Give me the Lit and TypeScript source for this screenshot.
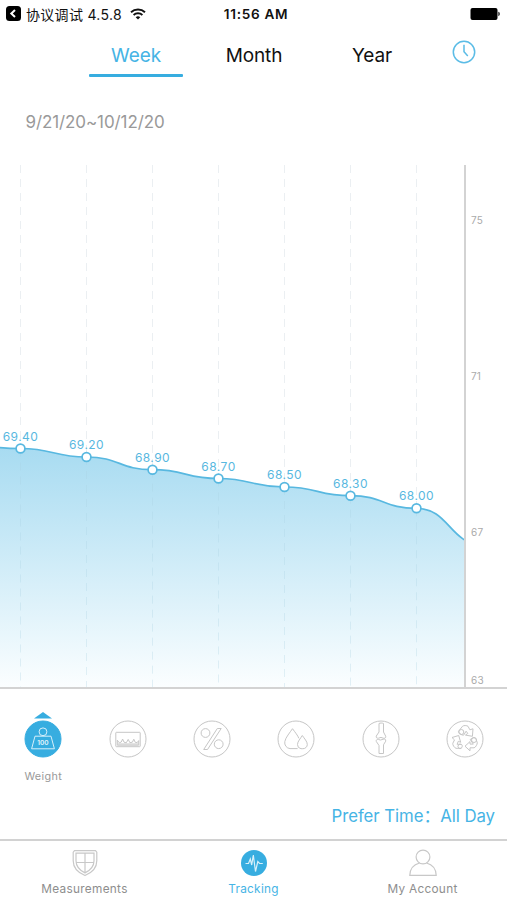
import { LitElement, html, svg, css } from "lit";
import { customElement } from "lit/decorators.js";

const POINTS = [
  { x: 20.5, y: 448.5, label: "69.40" },
  { x: 86.5, y: 457, label: "69.20" },
  { x: 152.5, y: 469.7, label: "68.90" },
  { x: 218.5, y: 478.5, label: "68.70" },
  { x: 284.5, y: 487, label: "68.50" },
  { x: 350.5, y: 495.7, label: "68.30" },
  { x: 416.5, y: 508.3, label: "68.00" },
];

const TICKS = [
  { y: 223.5, label: "75" },
  { y: 379.5, label: "71" },
  { y: 535.5, label: "67" },
  { y: 684, label: "63" },
];

function curve(): string {
  const all = [{ x: -45.5, y: 444 }, ...POINTS, { x: 482.5, y: 544.5 }];
  let d = `M${all[0].x} ${all[0].y}`;
  for (let i = 1; i < all.length; i++) {
    const a = all[i - 1];
    const b = all[i];
    const m = (a.x + b.x) / 2;
    d += ` C${m} ${a.y} ${m} ${b.y} ${b.x} ${b.y}`;
  }
  return d;
}

const METRICS = [
  {
    name: "Weight",
    active: true,
    icon: svg`<circle cx="19" cy="11.8" r="3.9"/><path d="M11 16.2h16l3.4 12.6H7.6Z"/>
      <text x="19" y="24.6" text-anchor="middle" class="kg">100</text>`,
  },
  {
    name: "BMI",
    icon: svg`<rect x="6.8" y="12.3" width="24.4" height="14.4" rx=".6"/>
      <path d="M8.3 25.2v-5l2 2.6 2-.8 1.3-3 1.4 3.2 2.3.6 1.9-3.4 1.7 3.3 2.5-.5 1.4-3 1.4 3.1 2 .3 1.500-2v4.600Z"/><path d="M9 24h20"/>`,
  },
  {
    name: "Body fat",
    icon: svg`<circle cx="12.5" cy="13" r="4.4"/><circle cx="25.7" cy="24.2" r="4.4"/>
      <path d="M24.3 8.500h3.900L14.500 29.500H10.700Z"/>`,
  },
  {
    name: "Water",
    icon: svg`<path d="M20.6 28.6H13a5.900 5.900 0 0 1-5.200-7C8.500 17.500 13 12.500 15.500 8.700c2.500 3.500 5.500 7 6.300 9.600"/>
      <path d="M25.300 15.500c2 3 5 6 5 9a4.300 4.300 0 0 1-4.500 4.200H24a4.200 4.200 0 0 1-3.500-4.200c0-3 3-6 4.800-9Z"/>`,
  },
  {
    name: "Bone",
    icon: svg`<path d="M17 3.500c1-.6 3.300-.6 4.500 0v8.500l2.200 4.200c.4 1.700-1 2.400-2.500 2L19 17.400l-2.500.8c-1.800.2-2.700-.8-2.200-2.200l2.700-4Z"/>
      <path d="M17 33.500h4.500V24.800l2.200-3.600c.4-2-1.200-2.800-2.700-1.900l-2.500.7-2-.5c-1.700-.3-2.700.7-2.200 2l2.700 4Z"/>`,
  },
  {
    name: "Metabolism",
    icon: svg`<path d="M16.500 6.300c.8-1 4.500-1 5.500 0l1.900 3.500 3.100-1-.6 7.500-6.900-1.200 2.300-1.700-1.700-2.200-2.500 4"/>
      <path d="M12.500 11.300 16.500 6.300M12.500 11.300c.2 2 3 3.900 5.100 3.900"/><circle cx="15.300" cy="12" r="2.500"/>
      <path d="M6 17.500l6.700-2 2 6.800-2.400-1-1.200 3h4.300c1.400.8 1 3.600-.5 4H10c-1.600-.5-3.600-3.500-3.200-5l1.700-3.400Z"/><path d="M15.400 24.500a2.200 2.200 0 1 0 0 3.700"/>
      <path d="M24.200 19.500l3-1.700c1.600-.1 2.600.6 2.900 1.500l1.200 3.500c0 1.600-1.700 4.600-3.200 5H24v3l-5-4.600 5-4.600v2.500h3.300Z"/><circle cx="28" cy="20" r="2.500"/>`,
  },
];

@customElement("app-root")
export class AppRoot extends LitElement {
  static styles = css`
    :host {
      display: flex;
      flex-direction: column;
      width: 507px;
      height: 900px;
      overflow: hidden;
      background: #fff;
      font-family: Inter, "Noto Sans CJK SC", sans-serif;
      color: #111;
    }
    :host > div { flex: none; }
    svg { display: block; fill: none; overflow: visible; }
    .status {
      height: 27px;
      display: grid;
      grid-template-columns: 1fr auto 1fr;
      align-items: center;
      box-sizing: border-box;
      padding: 0 7px 0 6px;
      font-size: 14px;
    }
    .back { display: flex; align-items: center; gap: 5px; }
    .carrier { white-space: nowrap; letter-spacing: 0.3px; }
    .wifi { margin-left: 3px; }
    .time { font-weight: 600; font-size: 13.6px; letter-spacing: 0.7px; padding: 1px 0 0 6px; }
    .battery { justify-self: end; }
    .tabs {
      height: 51px;
      display: grid;
      grid-template-columns: 94px 94px 94px 1fr;
      column-gap: 24px;
      padding-left: 89px;
      font-size: 19px;
      letter-spacing: -0.1px;
    }
    .tab {
      position: relative;
      height: 50px;
      text-align: center;
      line-height: 58px;
    }
    .tab.on { color: #46b4e5; }
    .tab.on::after {
      content: "";
      position: absolute;
      left: 0;
      right: 0;
      bottom: 0;
      height: 3.5px;
      border-radius: 1px;
      background: #37ade0;
    }
    .clock { margin: 13px 0 0 9px; }
    .range {
      height: 86px;
      box-sizing: border-box;
      padding: 32px 0 0 25.5px;
      line-height: 24px;
      font-size: 17px;
      letter-spacing: -0.1px;
      color: #999;
    }
    .chart { height: 525px; overflow: hidden; }
    .chart svg { overflow: hidden; }
    .grid { stroke: #e4eaee; stroke-opacity: .75; stroke-dasharray: 8 6; }
    .grid.under { stroke: #a9cfe0; stroke-opacity: .3; }
    .line { stroke: #58b8e0; stroke-width: 1.7; }
    .dot { fill: #fff; stroke: #58b8e0; stroke-width: 1.7; }
    .value { fill: #58b8df; font-size: 12px; letter-spacing: .45px; text-anchor: middle; }
    .tick { fill: #aaa; font-size: 10px; letter-spacing: .2px; }
    .axis { stroke: #d3d3d3; stroke-width: 2; }
    .metrics {
      height: 109px;
      display: grid;
      grid-template-columns: repeat(6, 84.4px);
      padding-left: 1px;
    }
    .metric { display: flex; flex-direction: column; align-items: center; padding-top: 22px; }
    .arrow { height: 9px; color: #37ade0; }
    .metric .icon { stroke: #c6c6c6; stroke-width: 1; stroke-linejoin: round; }
    .metric .icon.on { stroke: #d7effa; }
    .icon.on .ring { fill: #37ade0; stroke: #37ade0; }
    .kg { fill: #e5f5fc; stroke: none; font-size: 6.5px; font-weight: 600; }
    .caption { margin-top: 11px; font-size: 10.8px; line-height: 15px; color: #999; letter-spacing: .35px; }
    .prefer {
      height: 41px;
      box-sizing: border-box;
      display: flex;
      justify-content: flex-end;
      padding: 6px 12px 0 0;
      font-size: 16.8px;
      line-height: 24px;
      letter-spacing: -0.05px;
      color: #46b4e5;
    }
    .nav {
      height: 61px;
      box-sizing: border-box;
      border-top: 2px solid #d2d2d2;
      display: grid;
      grid-template-columns: repeat(3, 1fr);
      font-size: 11.8px;
      color: #8e8e8e;
    }
    .item { display: flex; flex-direction: column; align-items: center; padding-top: 7.5px; gap: 4px; letter-spacing: .3px; line-height: 16px; }
    .item.on { color: #46b4e5; }
    .item svg { stroke: #c8c8c8; stroke-width: 1.2; }
  `;

  render() {
    const d = curve();
    return html`
      <div class="status">
        <div class="back">
          <svg width="15" height="15" viewBox="0 0 15 15"><rect width="15" height="15" rx="3.5" fill="#000"/><path d="M9 4 5.300 7.500 9 11" stroke="#fff" stroke-width="2"/></svg>
          <span class="carrier">协议调试 4.5.8</span>
          <svg class="wifi" width="16" height="12" viewBox="0 0 16 12" stroke="#111" stroke-width="1.9"><path d="M1 4.300a10.300 10.300 0 0 1 14 0M3.600 7a6.500 6.500 0 0 1 8.800 0"/><path d="M8 11.500 5.700 9.300a3.300 3.300 0 0 1 4.600 0Z" fill="#111" stroke="none"/></svg>
        </div>
        <div class="time">11:56 AM</div>
        <svg class="battery" width="31" height="12" viewBox="0 0 31 12"><rect x="1.5" width="27" height="12" rx="2" fill="#000"/><path d="M29.300 3.800c2 .5 2 3.900 0 4.400Z" fill="#222"/></svg>
      </div>
      <div class="tabs">
        <div class="tab on">Week</div>
        <div class="tab">Month</div>
        <div class="tab">Year</div>
        <svg class="clock" width="24" height="24" viewBox="0 0 24 24" stroke="#5bbce6" stroke-width="1.5"><circle cx="12" cy="12" r="10.7"/><path d="M12 4.800v7l3.800 4.200"/></svg>
      </div>
      <div class="range">9/21/20~10/12/20</div>
      <div class="chart">
        <svg width="507" height="525" viewBox="0 164 507 525">
          <defs>
            <linearGradient id="fade" gradientUnits="userSpaceOnUse" x1="0" y1="446" x2="0" y2="687">
              <stop offset="0" stop-color="#a7dbf1"/><stop offset="1" stop-color="#fbfeff"/>
            </linearGradient>
            <clipPath id="plot"><rect x="0" y="164" width="464" height="524"/></clipPath>
          </defs>
          <g clip-path="url(#plot)">
            <path d="${d} V688 H-45.5 Z" fill="url(#fade)"/>
            ${POINTS.map((p) => svg`<path class="grid" d="M${p.x} 165V${p.y}"/><path class="grid under" d="M${p.x} ${p.y}V688"/>`)}
            <path class="line" d="${d}"/>
          </g>
          ${POINTS.map((p) => svg`<circle class="dot" cx="${p.x}" cy="${p.y}" r="4.4"/><text class="value" x="${p.x}" y="${p.y - 8}">${p.label}</text>`)}
          <path class="axis" d="M465 165V688M0 688H507"/>
          ${TICKS.map((t) => svg`<text class="tick" x="471" y="${t.y}">${t.label}</text>`)}
        </svg>
      </div>
      <div class="metrics">
        ${METRICS.map((m) => html`
          <div class="metric">
            <svg class="arrow" width="18" height="7" viewBox="0 0 18 7">${m.active ? svg`<path d="M0 6.500 9 0l9 6.500Z" fill="currentColor"/>` : ""}</svg>
            <svg class="icon ${m.active ? "on" : ""}" width="38" height="38" viewBox="0 0 38 38"><circle class="ring" cx="19" cy="19" r="18"/>${m.icon}</svg>
            ${m.active ? html`<div class="caption">${m.name}</div>` : ""}
          </div>`)}
      </div>
      <div class="prefer">Prefer Time：All Day</div>
      <div class="nav">
        <div class="item">
          <svg width="28" height="28" viewBox="0 0 28 28"><path d="M3.500 1.700h21l1.300 1.500v8.500c0 7-5 12-11.800 14.800C7.200 23.700 2.200 18.700 2.200 11.700V3.200Z"/><path d="M5 4.200h18v7.500c0 5.500-4 9.700-9 12.200-5-2.500-9-6.700-9-12.200ZM14 4v20M5 13.500h18"/></svg>
          <span>Measurements</span>
        </div>
        <div class="item on">
          <svg width="28" height="28" viewBox="0 0 28 28"><circle cx="14" cy="14" r="13" fill="#37ade0" stroke="none"/><path d="M5.500 14.500h3l1.800-4.500 1.400 6 1.600-10L15.500 22.500l2.300-10 1.800 2h3.200" stroke="#d9f0fa"/></svg>
          <span>Tracking</span>
        </div>
        <div class="item">
          <svg width="28" height="28" viewBox="0 0 28 28"><circle cx="14" cy="8" r="6.9"/><path d="M10.500 14C5 15.500 1 19.500 .8 26.300h26.400C27 19.500 23 15.500 17.500 14"/></svg>
          <span>My Account</span>
        </div>
      </div>
    `;
  }
}
